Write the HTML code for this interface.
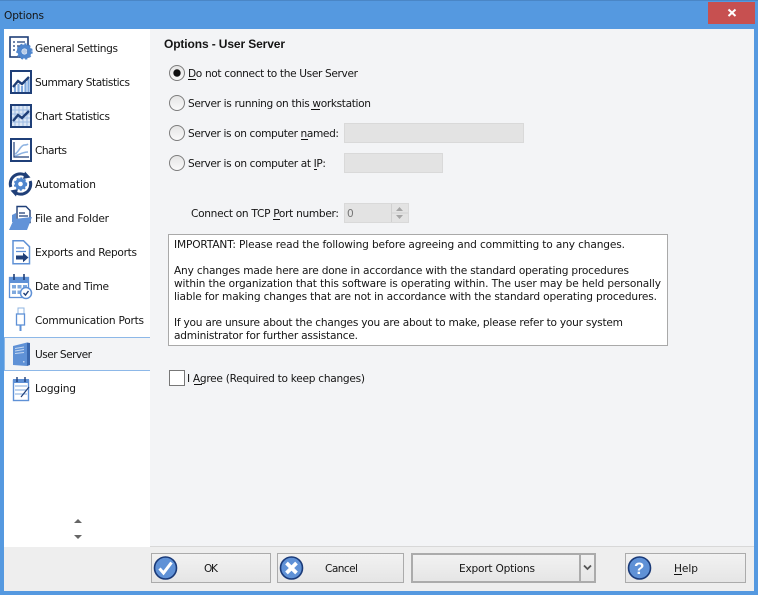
<!DOCTYPE html>
<html><head><meta charset="utf-8"><title>Options</title>
<style>
html,body{margin:0;padding:0;width:758px;height:595px;overflow:hidden;background:#5599E0}
svg{display:block}
text{font-family:"DejaVu Sans",sans-serif;font-size:10.6px;fill:#151515;white-space:pre}
</style></head><body>
<svg width="758" height="595" viewBox="0 0 758 595" xmlns="http://www.w3.org/2000/svg">
<defs>
<linearGradient id="b" x1="0" y1="0" x2="0" y2="1"><stop offset="0" stop-color="#f2f2f2"/><stop offset="1" stop-color="#e5e5e5"/></linearGradient>
<linearGradient id="r" x1="0" y1="0" x2="0" y2="1"><stop offset="0" stop-color="#e4e4e4"/><stop offset="1" stop-color="#fafafa"/></linearGradient>
<symbol id="radio" viewBox="0 0 16 16" overflow="visible"><circle cx="8" cy="8" r="7.5" fill="url(#r)" stroke="#7d7d7d"/></symbol>
</defs>
<rect width="758" height="595" fill="#5599E0"/>
<rect width="758" height="1" fill="#4A86C6"/>
<rect x="708" y="2" width="47" height="22" fill="#C75050"/>
<path d="M728.500 9.500l7 6.500M735.500 9.500l-7 6.500" stroke="#fff" stroke-width="2"/>
<text x="4" y="19" textLength="40">Options</text>

<!-- panels -->
<rect x="4" y="29" width="750" height="562" fill="#F3F4F6"/>
<rect x="4" y="29" width="146" height="518" fill="#fff"/>
<rect x="4" y="547" width="750" height="44" fill="#EEEEEE"/>
<rect x="150" y="546" width="604" height="1" fill="#D8D8D8"/>
<rect x="4" y="337" width="146" height="34" fill="#F3F4F6"/>
<rect x="4" y="337" width="146" height="1" fill="#8DB8E8"/>
<rect x="4" y="370" width="146" height="1" fill="#8DB8E8"/>
<rect x="4" y="337" width="1" height="34" fill="#8DB8E8"/>

<!-- sidebar text -->
<text x="35" y="52" textLength="83">General Settings</text>
<text x="35" y="86" textLength="95">Summary Statistics</text>
<text x="35" y="120" textLength="75">Chart Statistics</text>
<text x="35" y="154" textLength="32">Charts</text>
<text x="35" y="188" textLength="61">Automation</text>
<text x="35" y="222" textLength="74">File and Folder</text>
<text x="35" y="256" textLength="102">Exports and Reports</text>
<text x="35" y="290" textLength="74">Date and Time</text>
<text x="35" y="324" textLength="109">Communication Ports</text>
<text x="35" y="358" textLength="57">User Server</text>
<text x="35" y="392" textLength="41">Logging</text>

<!-- icon: general settings -->
<g>
<rect x="10" y="37" width="18" height="20" fill="#fff" stroke="#1F3F78" stroke-width="1.600"/>
<path d="M13 42h2M17 42h8M13 46h2M17 46h6M13 50h2M17 50h4" stroke="#1F3F78" stroke-width="1.300"/>
<circle cx="24.500" cy="51.500" r="5" fill="none" stroke="#4F86CE" stroke-width="4"/>
<circle cx="24.500" cy="51.500" r="7.200" fill="none" stroke="#4F86CE" stroke-width="2" stroke-dasharray="2.200 2"/>
<circle cx="24.500" cy="51.500" r="2.500" fill="#B6CBE8"/>
</g>
<!-- icon: summary -->
<g>
<rect x="11" y="71" width="20" height="22" fill="#fff" stroke="#1F3F78" stroke-width="2"/>
<path d="M15 92v-6M18.500 92v-8M22 92v-6M25.500 92v-10M28.500 92v-13" stroke="#7FA9DE" stroke-width="2.200"/>
<path d="M13 87l5-6 4 3 7-7" fill="none" stroke="#1F3F78" stroke-width="2.400"/>
</g>
<!-- icon: chart stats -->
<g>
<rect x="11" y="105" width="20" height="22" fill="#DCE7F5" stroke="#1F3F78" stroke-width="2"/>
<path d="M15 106v20M19 106v20M23 106v20M27 106v20M12 110h18M12 114h18M12 118h18M12 122h18" stroke="#9DBBE3" stroke-width="1"/>
<path d="M13 121l5-6 4 3 7-7" fill="none" stroke="#1F3F78" stroke-width="2.400"/>
</g>
<!-- icon: charts -->
<g>
<rect x="11" y="139" width="20" height="22" fill="#fff" stroke="#1F3F78" stroke-width="2"/>
<path d="M14 142v15h15" fill="none" stroke="#1F3F78" stroke-width="1.200"/>
<path d="M15 154c4-2 5-8 9-9 2 0 3 0 4-1M15 156c4-1 7-4 13-4" fill="none" stroke="#8FB4E2" stroke-width="1.600"/>
</g>
<!-- icon: automation -->
<g>
<path d="M10.800 187A10 10 0 0 1 26.500 176M30.200 181A10 10 0 0 1 14.500 192" fill="none" stroke="#1F3F78" stroke-width="3"/>
<path d="M25 171.500l5.500 6-7.500 1.500zM16 196.500l-5.500-6 7.500-1.500z" fill="#1F3F78"/>
<circle cx="20.500" cy="184" r="4" fill="none" stroke="#4F86CE" stroke-width="3.400"/>
<circle cx="20.500" cy="184" r="6" fill="none" stroke="#4F86CE" stroke-width="1.400" stroke-dasharray="2 2"/>
</g>
<!-- icon: file and folder -->
<g>
<path d="M12 215l4-2v9h-4z" fill="#5F91D6"/>
<path d="M17 206.500h9l4 4v12H17z" fill="#fff" stroke="#1F3F78" stroke-width="1.400"/>
<path d="M19 213h6M19 216h9" stroke="#1F3F78" stroke-width="1.200"/>
<path d="M14 219l18-2-5 13H9z" fill="#6293D8"/>
</g>
<!-- icon: exports -->
<g>
<path d="M13 240.700h10.500l6 6v17H13z" fill="#fff" stroke="#5F91D6" stroke-width="1.500"/>
<path d="M16 248h8M16 251.500h10" stroke="#5F91D6" stroke-width="1.200"/>
<path d="M16 255.500h7v-2.800l5.500 4.800-5.500 4.800v-2.800h-7z" fill="#1F3F78"/>
</g>
<!-- icon: date -->
<g>
<rect x="9.500" y="277.500" width="19" height="20" fill="#fff" stroke="#5F91D6" stroke-width="1.300"/>
<rect x="9" y="277" width="20" height="6" fill="#5F91D6"/>
<path d="M14 274v6M24 274v6" stroke="#1F3F78" stroke-width="1.600"/>
<path d="M12 285h4v3.500h-4zM17.500 285h4v3.500h-4zM23 285h4v3.500h-4zM12 290.500h4v3.500h-4zM17.500 290.500h4v3.500h-4z" fill="#7FA9DE"/>
<circle cx="26" cy="293" r="5.500" fill="#fff" stroke="#5F91D6" stroke-width="1.500"/>
<path d="M23.500 293l2 2 3-4" fill="none" stroke="#1F3F78" stroke-width="1.400"/>
</g>
<!-- icon: usb -->
<g>
<rect x="18" y="308" width="6" height="6" fill="#fff" stroke="#8FB4E2"/>
<rect x="16.500" y="314" width="8" height="11" fill="#fff" stroke="#5F91D6" stroke-width="1.300"/>
<rect x="19.500" y="325" width="2" height="6" fill="#5F91D6"/>
</g>
<!-- icon: server -->
<g>
<path d="M13 346l14-3.500V366l-14-1z" fill="#5F91D6"/>
<path d="M27 342.500l3 .5v22l-3 1z" fill="#3A67AD"/>
<path d="M15 348.500l9-1.500M15 351l9-1.500M15 353.500l9-1" stroke="#C7D9F1" stroke-width="1"/>
<rect x="23" y="361" width="1.500" height="1.500" fill="#C7D9F1"/>
</g>
<!-- icon: logging -->
<g>
<rect x="13.500" y="380.500" width="15" height="20" fill="#fff" stroke="#5F91D6" stroke-width="1.400"/>
<rect x="13" y="379" width="16" height="4" fill="#5F91D6"/>
<path d="M17 377v5M25 377v5" stroke="#1F3F78" stroke-width="1.400"/>
<path d="M15 386h12M15 390h12M15 394h12" stroke="#7FA9DE"/>
<path d="M21 397l8-10" stroke="#1F3F78" stroke-width="1.200"/>
</g>
<!-- scroll arrows -->
<path d="M74 523h8l-4-4zM74 535h8l-4 4z" fill="#666"/>

<!-- main -->
<text x="164" y="48" textLength="121" style="font-family:'Liberation Sans',sans-serif;font-size:12px;font-weight:bold">Options - User Server</text>

<use href="#radio" x="169" y="65" width="16" height="16"/>
<circle cx="177" cy="73" r="3.700" fill="#111"/>
<use href="#radio" x="169" y="95" width="16" height="16"/>
<use href="#radio" x="169" y="125" width="16" height="16"/>
<use href="#radio" x="169" y="155" width="16" height="16"/>

<text x="188" y="77" textLength="170">Do not connect to the User Server</text>
<rect x="188" y="79" width="8" height="1" fill="#111"/>
<text x="188" y="107" textLength="183">Server is running on this workstation</text>
<rect x="311" y="109" width="9" height="1" fill="#111"/>
<text x="188" y="137" textLength="151">Server is on computer named:</text>
<rect x="301" y="139" width="7" height="1" fill="#111"/>
<text x="188" y="167" textLength="138">Server is on computer at IP:</text>
<rect x="314" y="169" width="3" height="1" fill="#111"/>

<rect x="344.500" y="123.500" width="179" height="19" fill="#E3E3E3" stroke="#D9D9D9"/>
<rect x="344.500" y="153.500" width="98" height="19" fill="#E3E3E3" stroke="#D9D9D9"/>

<text x="191" y="217" textLength="148">Connect on TCP Port number:</text>
<rect x="273" y="219" width="7" height="1" fill="#111"/>
<rect x="344.500" y="203.500" width="64" height="19" fill="#E3E3E3" stroke="#D9D9D9"/>
<path d="M391.500 204v18M392 213h16" stroke="#D0D0D0"/>
<path d="M396 211h7l-3.500-4zM396 215h7l-3.500 4z" fill="#A5A5A5"/>
<text x="347" y="217" textLength="6" style="fill:#777">0</text>

<rect x="168.500" y="234.500" width="499" height="111" fill="#fff" stroke="#A9A9A9"/>
<text x="174" y="248" textLength="451">IMPORTANT: Please read the following before agreeing and committing to any changes.</text>
<text x="174" y="274" textLength="455">Any changes made here are done in accordance with the standard operating procedures</text>
<text x="174" y="287" textLength="487">within the organization that this software is operating within. The user may be held personally</text>
<text x="174" y="300" textLength="483">liable for making changes that are not in accordance with the standard operating procedures.</text>
<text x="174" y="326" textLength="449">If you are unsure about the changes you are about to make, please refer to your system</text>
<text x="174" y="339" textLength="184">administrator for further assistance.</text>

<rect x="169.500" y="370.500" width="15" height="15" fill="#fff" stroke="#777"/>
<text x="187" y="382" textLength="178">I Agree (Required to keep changes)</text>
<rect x="194" y="384" width="8" height="1" fill="#111"/>

<!-- buttons -->
<rect x="151.500" y="553.500" width="119" height="29" fill="url(#b)" stroke="#ABABAB"/>
<rect x="277.500" y="553.500" width="126" height="29" fill="url(#b)" stroke="#ABABAB"/>
<rect x="412" y="554" width="183" height="28" fill="url(#b)" stroke="#ABABAB" stroke-width="2"/>
<path d="M580 554v28" stroke="#ABABAB" stroke-width="2"/>
<path d="M584 565.500l3.500 3.500 3.500-3.500" fill="none" stroke="#555" stroke-width="1.800"/>
<rect x="625.500" y="553.500" width="120" height="29" fill="url(#b)" stroke="#ABABAB"/>

<circle cx="165.500" cy="568" r="11" fill="#5F91D6" stroke="#1A3A78" stroke-width="1.600"/>
<path d="M159.500 568.500l4 4.500 8-10.500" fill="none" stroke="#fff" stroke-width="3"/>
<circle cx="291.500" cy="568" r="11" fill="#5F91D6" stroke="#1A3A78" stroke-width="1.600"/>
<path d="M286.500 563l10 10M296.500 563l-10 10" stroke="#fff" stroke-width="3.800"/>
<circle cx="639.500" cy="568" r="11" fill="#5F91D6" stroke="#1A3A78" stroke-width="1.600"/>
<text x="634" y="574" textLength="11" style="font-family:'Liberation Sans',sans-serif;font-weight:bold;font-size:17px;fill:#fff">?</text>

<text x="204" y="572" textLength="14">OK</text>
<text x="325" y="572" textLength="33">Cancel</text>
<text x="459" y="572" textLength="76">Export Options</text>
<text x="674" y="572" textLength="24">Help</text>
<rect x="674" y="574" width="8" height="1" fill="#111"/>
</svg>
</body></html>
